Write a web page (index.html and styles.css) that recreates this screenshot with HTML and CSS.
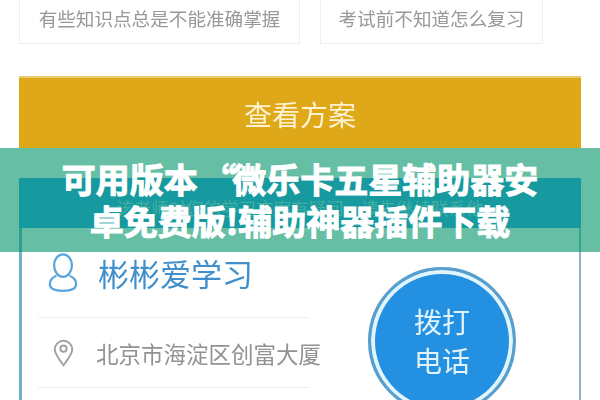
FILE: index.html
```html
<!DOCTYPE html>
<html lang="zh">
<head>
<meta charset="utf-8">
<title>可用版本</title>
<link rel="stylesheet" href="styles.css">
</head>
<body>
<div class="page">
  <div class="cards">
    <div class="tip tip-wide">有些知识点总是不能准确掌握</div>
    <div class="tip tip-narrow">考试前不知道怎么复习</div>
  </div>
  <div class="gold">查看方案</div>
  <div class="panel">
    <div class="panel-head">该老师对您的学习方案有疑问，请先继续联系他</div>
    <div class="panel-body">
      <div class="info">
        <div class="row row-name">
          <svg class="ic-user" viewBox="0 0 32 42" fill="none" stroke="#5aa6dc" stroke-width="2.4"><ellipse cx="16" cy="13" rx="9.5" ry="12"/><path d="M9 24C4 26 2 29 2 33c0 5 5 7 14 7s14-2 14-7c0-4-2-7-7-9"/></svg>
          <span class="name">彬彬爱学习</span>
        </div>
        <div class="row row-addr">
          <svg class="ic-pin" viewBox="0 0 24 32" fill="none" stroke="#a0a0a0" stroke-width="2.2"><path d="M12 30C6 22 2 17 2 12a10 10 0 0 1 20 0c0 5-4 10-10 18z"/><circle cx="12" cy="11" r="3.5"/></svg>
          <span class="addr">北京市海淀区创富大厦</span>
        </div>
      </div>
      <div class="call"><span>拨打<br>电话</span></div>
    </div>
  </div>
</div>
<div class="band">可用版本 <span class="quote">“</span>微乐卡五星辅助器安<br>卓免费版!辅助神器插件下载</div>
</body>
</html>
```
FILE: styles.css
```css
html, body {
  margin: 0;
  width: 600px;
  height: 400px;
  overflow: hidden;
  background: #fff;
  font-family: "Noto Sans CJK SC", "Noto Sans", sans-serif;
}
.page {
  height: 400px;
  padding: 0 19px;
  box-sizing: border-box;
  display: flex;
  flex-direction: column;
  filter: blur(0.6px);
}
.cards {
  display: flex;
  gap: 20px;
  height: 44px;
  flex: none;
}
.tip {
  border: 1px solid #eeeeee;
  border-top: 0;
  box-sizing: border-box;
  color: #989898;
  font-size: 18.6px;
  line-height: 36px;
  text-align: center;
  white-space: nowrap;
}
.tip-wide { width: 281px; }
.tip-narrow { width: 223px; }
.gold {
  margin-top: 32px;
  height: 72px;
  flex: none;
  background: #dfa818;
  border-top: 2px solid #eccb70;
  box-sizing: border-box;
  color: #fdf3d2;
  font-size: 28px;
  text-align: center;
  line-height: 72px;
}
.panel {
  margin-top: 30px;
  flex: 1;
  border-left: 3px solid #6fb0c8;
  border-right: 2px solid #8db3c8;
  display: flex;
  flex-direction: column;
}
.panel-head {
  height: 50px;
  flex: none;
  margin: 0 -2px 0 -3px;
  border-radius: 3px 3px 0 0;
  background: #37a3f2;
  color: #a6d6f8;
  font-size: 17.5px;
  text-align: center;
  line-height: 60px;
  white-space: nowrap;
  overflow: hidden;
}
.panel-body {
  flex: 1;
  display: flex;
  justify-content: space-between;
}
.info {
  width: 271px;
  margin-left: 16px;
  padding-top: 25px;
}
.row {
  display: flex;
  align-items: center;
}
.row-name {
  height: 65px;
  border-bottom: 1px solid #efefef;
  gap: 20px;
  padding-left: 10px;
  padding-bottom: 24px;
  box-sizing: border-box;
}
.row-addr {
  height: 70px;
  border-bottom: 1px solid #efefef;
  gap: 22px;
  padding-left: 15px;
  box-sizing: border-box;
}
.ic-user { width: 30px; height: 40px; flex: none; }
.ic-pin { width: 21px; height: 30px; flex: none; }
.name {
  color: #3f8fcc;
  font-size: 31px;
  line-height: 40px;
}
.addr {
  color: #929292;
  font-size: 22.5px;
  white-space: nowrap;
}
.call {
  width: 148px;
  height: 148px;
  margin: 39px 63px 0 0;
  flex: none;
  box-sizing: border-box;
  border-radius: 50%;
  background: #2490e2;
  border: 3px solid #5a9fcb;
  box-shadow: inset 0 0 0 4px #e2f5fc;
  color: #e2f2fb;
  font-size: 28px;
  line-height: 39px;
  text-align: center;
  padding-top: 32px;
}
.band {
  position: absolute;
  left: 0;
  top: 148px;
  width: 600px;
  height: 104px;
  background: rgba(0, 148, 105, 0.6);
  color: #fff;
  font-family: "Noto Sans CJK SC", sans-serif;
  font-weight: 700;
  font-size: 34px;
  line-height: 42px;
  text-align: center;
  padding-top: 10px;
  box-sizing: border-box;
  -webkit-text-stroke: 1px #fff;
}
.quote {
  margin-left: -3px;
  margin-right: -4px;
}
```
